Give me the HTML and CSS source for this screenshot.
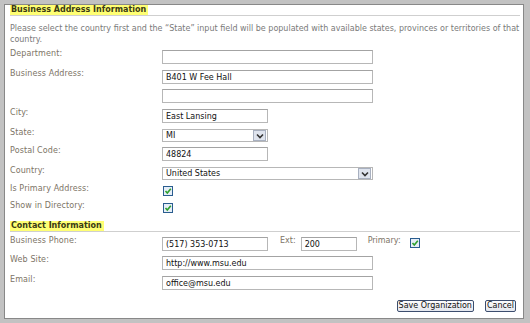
FILE: index.html
```html
<!DOCTYPE html>
<html>
<head>
  <meta charset="UTF-8">
  <title>Business Address Information</title>
  <link rel="stylesheet" href="styles.css">
</head>
<body>
  <div class="window">
    <div class="section-head"><span class="section-title">Business Address Information</span></div>
    <p class="note">Please select the country first and the “State” input field will be populated with available states, provinces or territories of that country.</p>

    <div class="row first">
      <label class="field-label">Department:</label>
      <input type="text" class="text-input wide">
    </div>
    <div class="row h19">
      <label class="field-label">Business Address:</label>
      <input type="text" class="text-input wide" value="B401 W Fee Hall">
    </div>
    <div class="row">
      <label class="field-label"></label>
      <input type="text" class="text-input wide">
    </div>
    <div class="row">
      <label class="field-label">City:</label>
      <input type="text" class="text-input short" value="East Lansing">
    </div>
    <div class="row h18">
      <label class="field-label">State:</label>
      <div class="select short"><span class="select-value">MI</span><span class="select-arrow"><svg width="8" height="6" viewBox="0 0 8 6"><path d="M1 1.5 L4 4.5 L7 1.5" fill="none" stroke="#333" stroke-width="1.6"/></svg></span></div>
    </div>
    <div class="row">
      <label class="field-label">Postal Code:</label>
      <input type="text" class="text-input short" value="48824">
    </div>
    <div class="row h18">
      <label class="field-label">Country:</label>
      <div class="select wide"><span class="select-value">United States</span><span class="select-arrow"><svg width="8" height="6" viewBox="0 0 8 6"><path d="M1 1.5 L4 4.5 L7 1.5" fill="none" stroke="#333" stroke-width="1.6"/></svg></span></div>
    </div>
    <div class="row h17">
      <label class="field-label">Is Primary Address:</label>
      <span class="check"><svg width="8" height="8" viewBox="0 0 8 8"><path d="M1.5 4 L3.3 6 L6.8 1.8" fill="none" stroke="#2ea02e" stroke-width="1.6"/></svg></span>
    </div>
    <div class="row h18">
      <label class="field-label">Show in Directory:</label>
      <span class="check"><svg width="8" height="8" viewBox="0 0 8 8"><path d="M1.5 4 L3.3 6 L6.8 1.8" fill="none" stroke="#2ea02e" stroke-width="1.6"/></svg></span>
    </div>

    <div class="section-head contact"><span class="section-title">Contact Information</span></div>

    <div class="row h19 after-head">
      <label class="field-label">Business Phone:</label>
      <input type="text" class="text-input short" value="(517) 353-0713">
      <span class="inline-label ext-label">Ext:</span>
      <input type="text" class="text-input ext" value="200">
      <span class="inline-label primary-label">Primary:</span>
      <span class="check"><svg width="8" height="8" viewBox="0 0 8 8"><path d="M1.5 4 L3.3 6 L6.8 1.8" fill="none" stroke="#2ea02e" stroke-width="1.6"/></svg></span>
    </div>
    <div class="row">
      <label class="field-label">Web Site:</label>
      <input type="text" class="text-input wide" value="http://www.msu.edu">
    </div>
    <div class="row h24">
      <label class="field-label">Email:</label>
      <input type="text" class="text-input wide" value="office@msu.edu">
    </div>

    <div class="actions">
      <button class="btn">Save Organization</button>
      <button class="btn">Cancel</button>
    </div>
  </div>
</body>
</html>
```

FILE: styles.css
```css
body {
  margin: 0;
  background: #c2c2c2;
  font-family: "DejaVu Sans", Verdana, sans-serif;
  font-size: 8px;
  color: #333;
}

.window {
  box-sizing: border-box;
  margin: 4px 6px 0 4px;
  height: 315px;
  padding: 0 3px 0 5px;
  background: #fff;
  border: 1px solid #888;
}

.section-head {
  border-bottom: 1px solid #cfcfcf;
  height: 10px;
  line-height: 10px;
}

.section-title {
  display: inline-block;
  padding: 0 2px 0 1px;
  background: #ffff73;
  color: #3a3a14;
  font-weight: bold;
}

.section-head.contact {
  margin-top: 1px;
}

.note {
  margin: 7px 0 0 0;
  line-height: 11px;
  color: #7a7a7a;
}

.row {
  display: flex;
  align-items: flex-start;
  height: 20px;
}

.row.first {
  margin-top: 5px;
}

.row.after-head {
  margin-top: 5px;
}

.h24 { height: 24px; }
.h19 { height: 19px; }
.h18 { height: 18px; }
.h17 { height: 17px; }

.field-label {
  width: 152px;
  flex-shrink: 0;
  margin-top: -1px;
  color: #7d7466;
  letter-spacing: 0.1px;
}

.text-input {
  box-sizing: border-box;
  height: 14px;
  margin: 0;
  padding: 0 3px;
  border: 1px solid #b7b7b7;
  border-top-color: #a3a3a3;
  font-family: "DejaVu Sans", Verdana, sans-serif;
  font-size: 8px;
  color: #111;
  background: #fff;
}

.wide {
  width: 211px;
}

.short {
  width: 106px;
}

.ext {
  width: 56px;
}

.select {
  box-sizing: border-box;
  display: flex;
  align-items: center;
  height: 13px;
  padding-left: 3px;
  border: 1px solid #b7b7b7;
  color: #111;
}

.select-value {
  flex: 1;
}

.select-arrow {
  display: flex;
  align-items: center;
  justify-content: center;
  width: 11px;
  height: 9px;
  margin-right: 1px;
  border: 1px solid #a8b0c0;
  background: #dfe4ee;
}

.check {
  display: flex;
  align-items: center;
  justify-content: center;
  box-sizing: border-box;
  width: 10px;
  height: 10px;
  margin: 1px 0 0 1px;
  border: 1px solid #2a5d8f;
  background: #e6eef8;
}

.inline-label {
  margin-top: -1px;
  color: #7d7466;
}

.ext-label {
  margin-left: 12px;
  margin-right: 5px;
}

.primary-label {
  margin-left: 11px;
  margin-right: 8px;
}

.actions {
  display: flex;
  justify-content: flex-end;
  gap: 11px;
  padding-right: 4px;
}

.btn {
  height: 12px;
  padding: 0 1px;
  font-family: "DejaVu Sans", Verdana, sans-serif;
  font-size: 8px;
  line-height: 10px;
  color: #111;
  background: linear-gradient(#fdfdfd, #e4e7ee);
  border: 1px solid #3c4d6e;
  border-radius: 2px;
}
```
